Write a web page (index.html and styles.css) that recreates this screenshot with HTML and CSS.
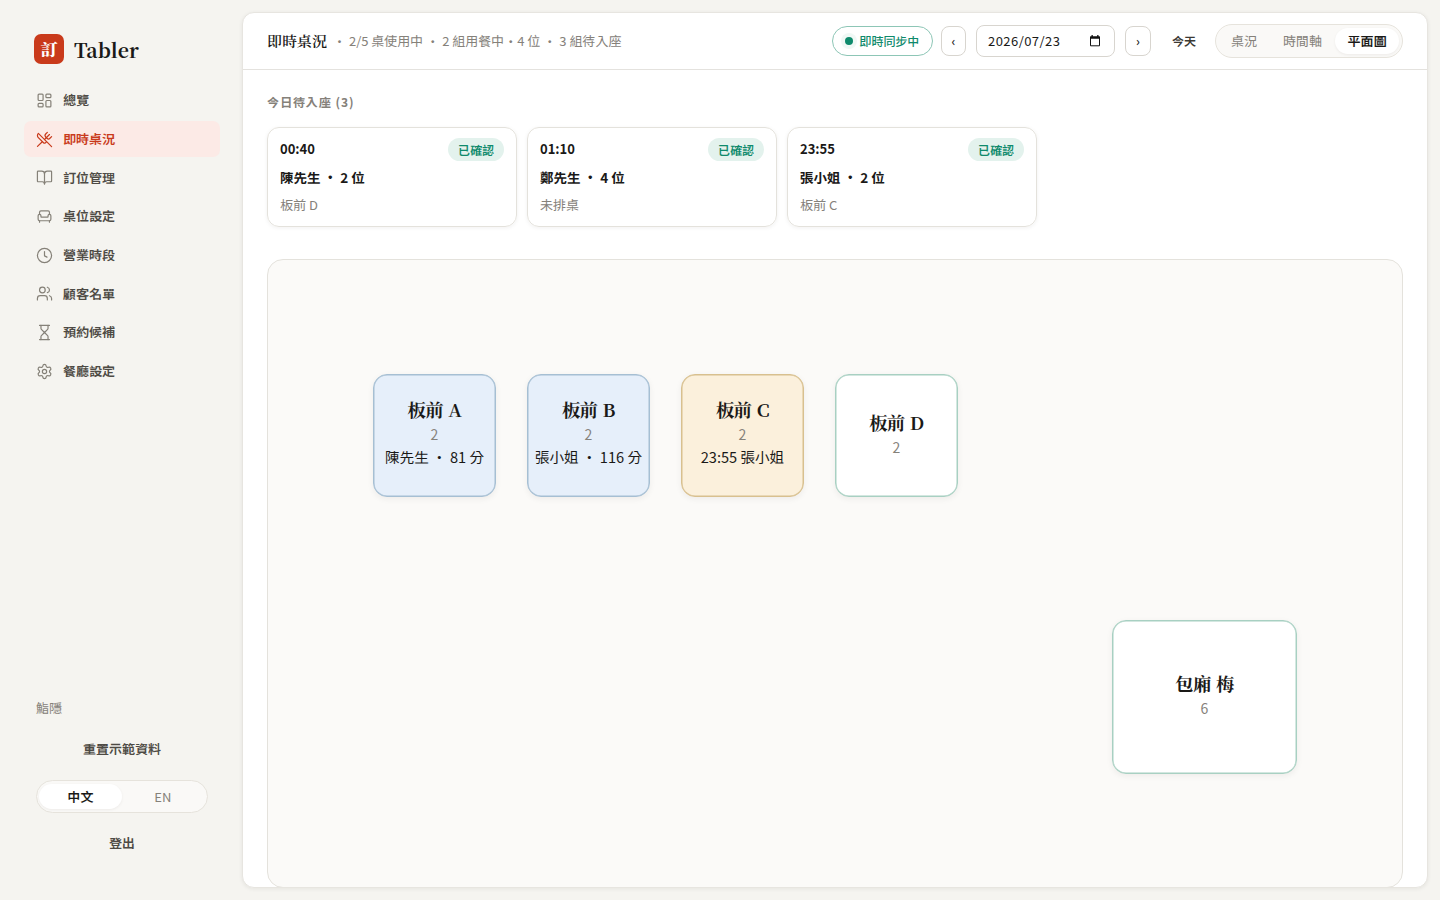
FILE: index.html
```html
<!DOCTYPE html>
<html lang="zh-Hant">
<head>
<meta charset="utf-8">
<title>Tabler</title>
<link rel="stylesheet" href="styles.css">
</head>
<body>
<div class="app">
  <aside class="sidebar">
    <div class="brand"><span class="logo">訂</span><span class="brand-name">Tabler</span></div>
    <nav class="nav">
      <a class="nav-item"><svg class="icon" viewBox="0 0 24 24"><rect x="3" y="3" width="7" height="9" rx="1.3"/><rect x="14" y="3" width="7" height="5" rx="1.3"/><rect x="14" y="12" width="7" height="9" rx="1.3"/><rect x="3" y="16" width="7" height="5" rx="1.3"/></svg>總覽</a>
      <a class="nav-item active"><svg class="icon" viewBox="0 0 24 24"><path d="m16 2-2.3 2.3a3 3 0 0 0 0 4.2l1.8 1.8a3 3 0 0 0 4.2 0L22 8"/><path d="M15 15 3.3 3.3a4.2 4.2 0 0 0 0 6l7.3 7.3c.7.7 2 .7 2.8 0L15 15Zm0 0 7 7"/><path d="m2.1 21.8 6.4-6.3"/><path d="m19 5-7 7"/></svg>即時桌況</a>
      <a class="nav-item"><svg class="icon" viewBox="0 0 24 24"><path d="M12 7v14"/><path d="M3 18a1 1 0 0 1-1-1V4a1 1 0 0 1 1-1h5a4 4 0 0 1 4 4 4 4 0 0 1 4-4h5a1 1 0 0 1 1 1v13a1 1 0 0 1-1 1h-6a3 3 0 0 0-3 3 3 3 0 0 0-3-3z"/></svg>訂位管理</a>
      <a class="nav-item"><svg class="icon" viewBox="0 0 24 24"><path d="M19 9V6a2 2 0 0 0-2-2H7a2 2 0 0 0-2 2v3"/><path d="M3 16a2 2 0 0 0 2 2h14a2 2 0 0 0 2-2v-5a2 2 0 0 0-4 0v1.5a.5.5 0 0 1-.5.5h-9a.5.5 0 0 1-.5-.5V11a2 2 0 0 0-4 0z"/><path d="M5 18v2M19 18v2"/></svg>桌位設定</a>
      <a class="nav-item"><svg class="icon" viewBox="0 0 24 24"><circle cx="12" cy="12" r="10"/><path d="M12 6.5V12.5l3.5 1.8"/></svg>營業時段</a>
      <a class="nav-item"><svg class="icon" viewBox="0 0 24 24"><path d="M16 21v-2a4 4 0 0 0-4-4H6a4 4 0 0 0-4 4v2"/><circle cx="9" cy="7" r="4"/><path d="M22 21v-2a4 4 0 0 0-3-3.87"/><path d="M16 3.13a4 4 0 0 1 0 7.75"/></svg>顧客名單</a>
      <a class="nav-item"><svg class="icon" viewBox="0 0 24 24"><path d="M5 22h14M5 2h14"/><path d="M17 22v-4.17a2 2 0 0 0-.59-1.42L12 12l-4.41 4.41A2 2 0 0 0 7 17.83V22"/><path d="M7 2v4.17a2 2 0 0 0 .59 1.42L12 12l4.41-4.41A2 2 0 0 0 17 6.17V2"/></svg>預約候補</a>
      <a class="nav-item"><svg class="icon" viewBox="0 0 24 24"><path d="M9.67 4.14a2.34 2.34 0 0 1 4.66 0 2.34 2.34 0 0 0 3.32 1.91 2.34 2.34 0 0 1 2.33 4.04 2.34 2.34 0 0 0 0 3.83 2.34 2.34 0 0 1-2.33 4.03 2.34 2.34 0 0 0-3.32 1.92 2.34 2.34 0 0 1-4.66 0 2.34 2.34 0 0 0-3.32-1.92 2.34 2.34 0 0 1-2.33-4.03 2.34 2.34 0 0 0 0-3.83 2.34 2.34 0 0 1 2.33-4.04 2.34 2.34 0 0 0 3.32-1.91"/><circle cx="12" cy="12" r="3"/></svg>餐廳設定</a>
    </nav>
    <div class="side-foot">
      <div class="shop">鮨隱</div>
      <button class="ghost">重置示範資料</button>
      <div class="segment lang"><span class="seg on">中文</span><span class="seg">EN</span></div>
      <button class="ghost logout">登出</button>
    </div>
  </aside>
  <main class="main">
    <header class="topbar">
      <h1 class="title">即時桌況</h1>
      <span class="summary">・ 2/5 桌使用中 ・ 2 組用餐中・4 位 ・ 3 組待入座</span>
      <div class="tools">
        <span class="sync"><i class="dot"></i>即時同步中</span>
        <button class="step">‹</button>
        <div class="date"><span>2026/07/23</span><svg class="cal" viewBox="0 0 12 12"><path d="M1.5 2h9v8.8h-9z"/><path class="cal-top" d="M1 1.5h10v2.3H1zM2.5 0h1.3v2H2.5zM8.2 0h1.3v2H8.2z"/></svg></div>
        <button class="step next">›</button>
        <button class="today">今天</button>
        <div class="segment views"><span class="seg">桌況</span><span class="seg">時間軸</span><span class="seg on">平面圖</span></div>
      </div>
    </header>
    <section class="content">
      <h2 class="section-title">今日待入座 (3)</h2>
      <div class="cards">
        <article class="card"><div class="card-head"><b class="time">00:40</b><span class="badge">已確認</span></div><div class="guest">陳先生 ・ 2 位</div><div class="seat">板前 D</div></article>
        <article class="card"><div class="card-head"><b class="time">01:10</b><span class="badge">已確認</span></div><div class="guest">鄭先生 ・ 4 位</div><div class="seat">未排桌</div></article>
        <article class="card"><div class="card-head"><b class="time">23:55</b><span class="badge">已確認</span></div><div class="guest">張小姐 ・ 2 位</div><div class="seat">板前 C</div></article>
      </div>
      <div class="floor">
        <div class="table busy pos-a"><span class="name">板前 A</span><span class="cap">2</span><span class="info">陳先生 ・ 81 分</span></div>
        <div class="table busy pos-b"><span class="name">板前 B</span><span class="cap">2</span><span class="info">張小姐 ・ 116 分</span></div>
        <div class="table held pos-c"><span class="name">板前 C</span><span class="cap">2</span><span class="info">23:55 張小姐</span></div>
        <div class="table pos-d"><span class="name">板前 D</span><span class="cap">2</span></div>
        <div class="table room"><span class="name">包廂 梅</span><span class="cap">6</span></div>
      </div>
    </section>
  </main>
</div>
</body>
</html>
```

FILE: styles.css
```css
* { box-sizing: border-box; }
body { margin: 0; background: #f5f4f0; color: #1a1917; font: 13px/20px "Noto Sans TC", "Noto Sans CJK TC", sans-serif; }
button { font: inherit; color: inherit; background: none; border: 0; padding: 0; margin: 0; }
.app { display: flex; width: 1440px; height: 900px; overflow: hidden; padding: 12px 12px 12px 0; }
.sidebar { width: 242px; flex: none; padding: 22px 22px 0 24px; display: flex; flex-direction: column; }
.brand { display: flex; align-items: center; gap: 10px; height: 30px; padding-left: 10px; }
.logo { width: 30px; height: 30px; border-radius: 7px; background: #c93a1b; color: #fff; display: grid; place-items: center; font: 900 17px/30px "Noto Serif TC", "Noto Serif CJK TC", "Liberation Serif", "Noto Sans CJK TC", serif; }
.brand-name { font: 700 19.5px/30px "Noto Serif TC", "Noto Serif CJK TC", "Liberation Serif", serif; padding-top: 2px; }
.nav { display: flex; flex-direction: column; gap: 2px; margin-top: 18px; }
.nav-item { display: flex; align-items: center; gap: 10px; height: 36.7px; flex: none; padding-left: 12px; border-radius: 7px; color: #4d4a44; font-weight: 600; }
.nav-item.active { background: #fceae6; color: #c93a1b; }
.icon { width: 17px; height: 17px; fill: none; stroke: #858178; stroke-width: 1.7; stroke-linecap: round; stroke-linejoin: round; }
.active .icon { stroke: #c93a1b; }
.side-foot { margin-top: auto; padding: 0 12px 35px; display: flex; flex-direction: column; }
.shop { color: #85817a; margin-bottom: 21px; }
.ghost { height: 20px; color: #4d4a44; font-weight: 600; }
.segment { display: flex; border: 1px solid #e6e3dc; background: #faf9f7; border-radius: 99px; padding: 3px; color: #85817a; }
.seg { display: flex; align-items: center; justify-content: center; border-radius: 99px; }
.seg.on { background: #fff; color: #1a1917; font-weight: 600; box-shadow: 0 1px 3px rgba(30,25,15,.06); }
.lang { height: 33px; margin: 21px 0 20px; padding-left: 2px; }
.lang .seg { flex: 1; }
.main { flex: 1; background: #fff; border: 1px solid #e7e5e0; border-radius: 12px; box-shadow: 0 1px 4px rgba(30,25,15,.07); overflow: hidden; }
.topbar { height: 57px; border-bottom: 1px solid #e4e2de; display: flex; align-items: center; padding: 0 24px; }
.title { margin: 0; font: 600 15px/22px "Noto Serif TC", "Noto Serif CJK TC", "Noto Sans CJK TC", serif; }
.summary { color: #85817a; margin-left: 6px; white-space: nowrap; }
.tools { margin-left: auto; display: flex; align-items: center; }
.sync { display: flex; align-items: center; gap: 6.5px; width: 101px; height: 30px; border: 1px solid #8dc6b6; border-radius: 99px; color: #0f8a6c; font-size: 12px; font-weight: 500; padding-left: 12px; }
.dot { width: 8px; height: 8px; border-radius: 50%; background: #0f8a6c; box-shadow: 0 0 0 4px #f0f8f5; }
.step { width: 25px; height: 30px; margin-left: 8px; border: 1px solid #d8d5cf; border-radius: 8px; font-size: 12px; font-weight: 600; }
.step.next { width: 26px; margin-left: 10px; }
.date { width: 139px; height: 32px; margin-left: 10px; border: 1px solid #d8d5cf; border-radius: 8px; padding: 0 13px 0 11px; display: flex; align-items: center; justify-content: space-between; letter-spacing: .45px; }
.cal { width: 12px; height: 12px; fill: none; stroke: #111; }
.cal-top { fill: #111; stroke: none; }
.today { width: 64px; padding-left: 2px; font-size: 12px; font-weight: 600; color: #3b3934; }
.views { width: 188px; height: 34px; padding-left: 2px; }
.views .seg { width: 52px; }
.views .seg:nth-child(2) { width: 65px; }
.views .seg:nth-child(3) { width: 64px; }
.content { padding: 22px 24px 0; }
.section-title { margin: 0; font-size: 12px; line-height: 20px; font-weight: 700; letter-spacing: .95px; color: #85817a; }
.cards { display: flex; gap: 10px; margin-top: 15px; }
.card { width: 250px; height: 100px; border: 1px solid #e4e2dc; border-radius: 12px; padding: 10px 12px; box-shadow: 0 1px 4px rgba(30,25,15,.06); }
.card-head { display: flex; justify-content: space-between; align-items: center; height: 23px; }
.time { padding-bottom: 2px; }
.badge { background: #e3f2ed; color: #0f8a6c; border-radius: 99px; font-size: 12px; line-height: 23px; padding: 0 10px; font-weight: 600; }
.guest { font-size: 13.5px; font-weight: 700; margin-top: 6px; }
.seat { color: #85817a; margin-top: 8px; }
.floor { position: relative; height: 629px; margin-top: 32px; border: 1px solid #e4e2dc; border-radius: 16px; background: #fbfaf8; }
.table { --edge: #a8d0c2; position: absolute; top: 114px; width: 123px; height: 123px; padding-bottom: 6px; border: 1px solid var(--edge); border-radius: 14px; background: #fff; box-shadow: inset 0 0 0 .5px var(--edge), 0 2px 6px rgba(30,25,15,.06); display: flex; flex-direction: column; align-items: center; justify-content: center; white-space: nowrap; }
.busy { --edge: #a6bfd3; background: #e6effa; }
.held { --edge: #d8c08f; background: #fbf0dc; }
.pos-a { left: 105px; }
.pos-b { left: 259px; }
.pos-c { left: 413px; }
.pos-d { left: 567px; padding-bottom: 5px; }
.room { left: 844px; top: 360px; width: 185px; height: 154px; padding-bottom: 5px; }
.name { font: 700 18.3px/27px "Noto Serif TC", "Noto Serif CJK TC", "Liberation Serif", "Noto Sans CJK TC", serif; }
.cap { font-size: 14px; line-height: 22px; color: #85817a; }
.info { font-size: 14.6px; line-height: 24px; }
```
